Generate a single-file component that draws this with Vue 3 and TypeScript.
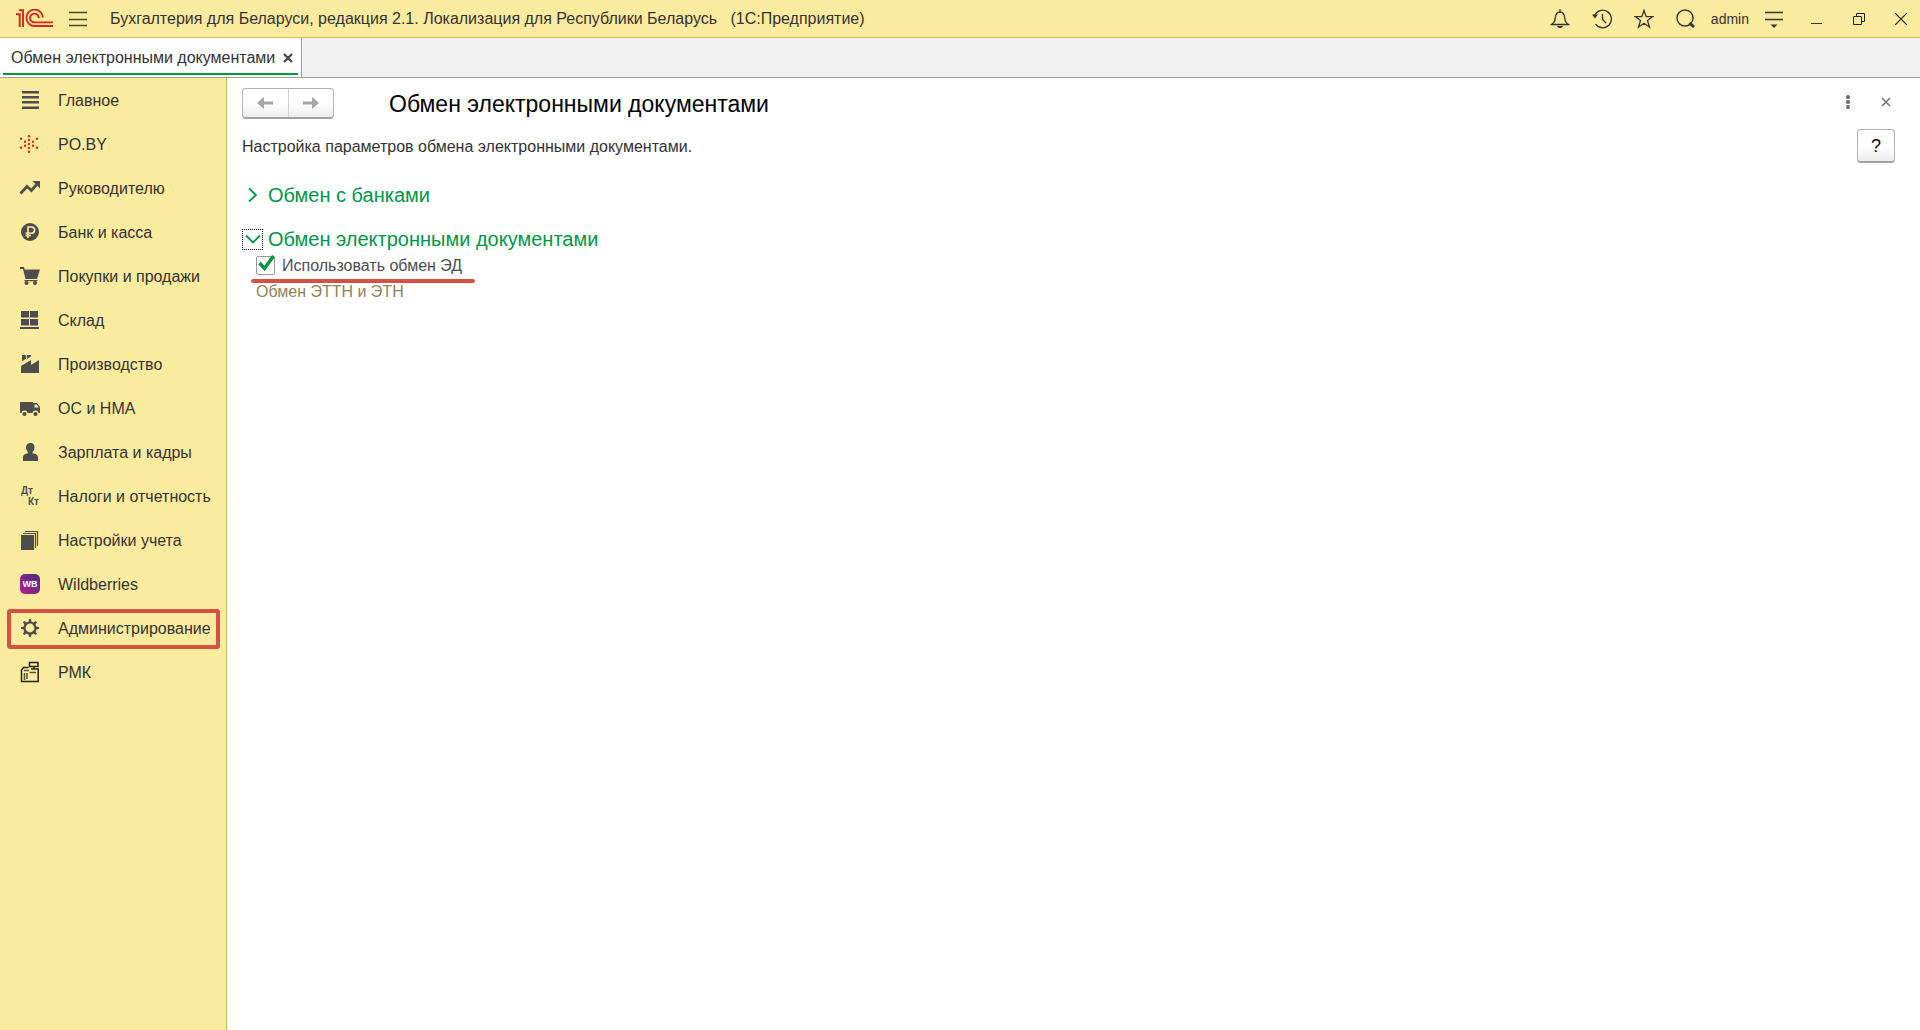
<script setup lang="ts">
import { ref } from 'vue'

interface Section {
  id: string
  title: string
  highlighted?: boolean
}

const appTitle =
  'Бухгалтерия для Беларуси, редакция 2.1. Локализация для Республики Беларусь   (1С:Предприятие)'

const sections: Section[] = [
  { id: 'main', title: 'Главное' },
  { id: 'poby', title: 'PO.BY' },
  { id: 'manager', title: 'Руководителю' },
  { id: 'bank', title: 'Банк и касса' },
  { id: 'trade', title: 'Покупки и продажи' },
  { id: 'stock', title: 'Склад' },
  { id: 'production', title: 'Производство' },
  { id: 'assets', title: 'ОС и НМА' },
  { id: 'salary', title: 'Зарплата и кадры' },
  { id: 'taxes', title: 'Налоги и отчетность' },
  { id: 'settings', title: 'Настройки учета' },
  { id: 'wb', title: 'Wildberries' },
  { id: 'admin', title: 'Администрирование', highlighted: true },
  { id: 'rmk', title: 'РМК' },
]

const dots: [number, number][] = [
  [10, 2.3], [10, 6], [10, 10], [10, 14], [10, 17.7],
  [6, 7.7], [14, 7.7], [6, 11.7], [14, 11.7],
  [2, 4.7], [18, 4.7], [2, 13.7], [18, 13.7],
]

const teeth = [0, 45, 90, 135, 180, 225, 270, 315]

const useExchange = ref(true)
</script>

<template>
  <div class="app">
    <header class="titlebar">
      <svg class="logo" width="38" height="20" viewBox="0 0 38 20" fill="none" stroke="#d9251d" stroke-width="1.9">
        <path d="M0 5.2h3.7V18M3 1.2h4V18" />
        <path d="M26.8 8.6A8.2 8.2 0 1 0 18.8 17H37M22.8 9.2A4.4 4.4 0 1 0 18.8 13.4H37" />
      </svg>
      <button class="icon-btn burger" aria-label="Меню">
        <svg width="18" height="16" viewBox="0 0 18 16" stroke="#4a4636" stroke-width="1.4">
          <path d="M0 1.5h18M0 8.500h18M0 14.500h18" />
        </svg>
      </button>
      <h1 class="app-title">{{ appTitle }}</h1>
      <div class="tools">
        <button class="icon-btn" aria-label="Уведомления">
          <svg width="20" height="20" viewBox="0 0 20 20" fill="none" stroke="#333" stroke-width="1.3">
            <path d="M10 0v3M1.500 15.500c2.500-1.500 3.500-3 3.700-6C5.500 5.500 7 3 10 3s4.500 2.500 4.800 6.500c.2 3 1.200 4.500 3.700 6z" />
            <path d="M7 17h6c-.5 1.500-1.500 2-3 2s-2.500-.5-3-2z" fill="#333" stroke="none" />
          </svg>
        </button>
        <button class="icon-btn" aria-label="История">
          <svg width="20" height="20" viewBox="0 0 20 20" fill="none" stroke="#333" stroke-width="1.3">
            <path d="M2.500 6.500A8.800 8.800 0 1 1 3.500 15.200M10.500 5v5.500l3.500 3.500" />
            <path d="M0 5.500h6l-3 4z" fill="#333" stroke="none" />
          </svg>
        </button>
        <button class="icon-btn" aria-label="Избранное">
          <svg width="20" height="20" viewBox="0 0 20 20" fill="none" stroke="#333" stroke-width="1.3">
            <path d="M10 1.500l2.200 6.100h6.600l-5.300 4 2 6.600L10 14.300l-5.500 3.900 2-6.600-5.300-4h6.600z" />
          </svg>
        </button>
        <button class="icon-btn" aria-label="Поиск">
          <svg width="20" height="20" viewBox="0 0 20 20" fill="none" stroke="#333">
            <circle cx="9" cy="9" r="8" stroke-width="1.4" />
            <path d="M13.500 14l4.500 4" stroke-width="3" />
          </svg>
        </button>
        <a class="user" href="#">admin</a>
        <button class="icon-btn" aria-label="Сервис">
          <svg width="20" height="20" viewBox="0 0 20 20">
            <path d="M1 3.500h18M1 10.500h18" stroke="#333" stroke-width="1.4" />
            <path d="M6.500 15.500h7l-3.500 3.500z" fill="#333" />
          </svg>
        </button>
      </div>
      <div class="window-buttons">
        <button class="icon-btn" aria-label="Свернуть">
          <svg width="12" height="12" viewBox="0 0 12 12"><path d="M0 10.500h11" stroke="#333" /></svg>
        </button>
        <button class="icon-btn" aria-label="Восстановить">
          <svg width="12" height="12" viewBox="0 0 12 12" fill="none" stroke="#222">
            <path d="M.5 3.500h8v8h-8zM3.500 3V.5h8v8H9" />
          </svg>
        </button>
        <button class="icon-btn" aria-label="Закрыть">
          <svg width="12" height="12" viewBox="0 0 12 12" stroke="#222" stroke-width="1.2">
            <path d="M0 0l12 12M12 0L0 12" />
          </svg>
        </button>
      </div>
    </header>

    <nav class="tabs">
      <div class="tab">
        <a class="tab-title" href="#">Обмен электронными документами</a>
        <button class="icon-btn" aria-label="Закрыть вкладку">
          <svg width="10" height="10" viewBox="0 0 10 10" stroke="#444" stroke-width="2.2">
            <path d="M1 1l8 8M9 1L1 9" />
          </svg>
        </button>
      </div>
    </nav>

    <div class="body">
      <aside class="sidebar">
        <a v-for="s in sections" :key="s.id" href="#" class="item" :class="{ highlighted: s.highlighted }">
          <svg class="item-icon" width="22" height="22" viewBox="0 0 22 22" fill="#4d4d4d">
            <path v-if="s.id === 'main'" d="M3 2h17v2.500H3zM3 7h17v2.500H3zM3 12h17v2.500H3zM3 17.500h17V20H3z" />
            <g v-else-if="s.id === 'poby'" fill="#dd2a1b">
              <circle v-for="(d, i) in dots" :key="i" :cx="d[0]" :cy="d[1] + 1" r="1.200" />
            </g>
            <g v-else-if="s.id === 'manager'">
              <path d="M1.500 16.500l6.500-7 4.500 4L18 7" fill="none" stroke="#4d4d4d" stroke-width="2.800" />
              <path d="M13.500 4H21v7.500z" />
            </g>
            <g v-else-if="s.id === 'bank'">
              <circle cx="11" cy="11" r="9" />
              <path d="M9 17V6h3.500a3 3 0 0 1 0 6.200H6.500M6.500 14.500H12" fill="none" stroke="#fbeb9e" stroke-width="1.600" />
            </g>
            <g v-else-if="s.id === 'trade'">
              <path d="M1 2h4l.6 2.500H21L18 14H6.500L4 4H1zM5.500 15h13v1.300h-13z" />
              <circle cx="7.500" cy="18" r="2" /><circle cx="16" cy="18" r="2" />
            </g>
            <path v-else-if="s.id === 'stock'" d="M2 2h8v6.500H2zM11 2h8v6.500h-8zM2 10h8v6.500H2zM11 10h8v6.500h-8zM1 18h19v2H1z" />
            <path v-else-if="s.id === 'production'" d="M2 20v-7l10-6v5l8-5v13zM3 2h4v3.500l-4 3zM8 2h4v1.500L8 6z" />
            <g v-else-if="s.id === 'assets'">
              <path d="M1 5h13v11H1zM14 6h4l3 4v6h-7z" />
              <path d="M15.500 7.500h2.200l2 3h-4.200z" fill="#fbeb9e" />
              <g fill="#fbeb9e"><circle cx="5.500" cy="16.500" r="3" /><circle cx="16.500" cy="16.500" r="3" /></g>
              <circle cx="5.500" cy="17" r="2.100" /><circle cx="16.500" cy="17" r="2.100" />
            </g>
            <path v-else-if="s.id === 'salary'" d="M11.500 2c2.500 0 4 1.600 4 4.200 0 2.200-1 4-2 5v1c3 .5 5.500 1.500 5.500 4V20H4v-3.800c0-2.500 2.500-3.500 5-4v-1c-1-1-2-2.800-2-5C7 3.600 9 2 11.500 2z" />
            <g v-else-if="s.id === 'taxes'" class="glyph-text">
              <text x="2" y="9">Дт</text><text x="9" y="20">Кт</text>
            </g>
            <g v-else-if="s.id === 'settings'">
              <path d="M2 6h13v15H2z" />
              <path d="M4 4.500h12.500V19M6 2.500h12.500V17" fill="none" stroke="#4d4d4d" stroke-width="1.200" />
            </g>
            <g v-else-if="s.id === 'wb'">
              <defs>
                <linearGradient id="wb" x1="0" y1="1" x2="1" y2="0">
                  <stop offset="0" stop-color="#b0218c" /><stop offset="1" stop-color="#4a2a86" />
                </linearGradient>
              </defs>
              <rect x="1" y="1" width="20" height="20" rx="5" fill="url(#wb)" />
              <text class="wb-text" x="11" y="14" text-anchor="middle">WB</text>
            </g>
            <g v-else-if="s.id === 'admin'">
              <circle cx="11" cy="11" r="5.500" fill="none" stroke="#4d4d4d" stroke-width="2.200" />
              <path v-for="t in teeth" :key="t" d="M9.500 5.500L10 2h2l.5 3.500z" :transform="`rotate(${t} 11 11)`" />
            </g>
            <g v-else fill="none" stroke="#222" stroke-width="1.500">
              <path d="M10.500 1.500h8.500v4h-8.500zM15 5.500v3M9.500 6.500H4.500L2.500 9v11.500h16.700V8H12" />
              <path d="M5 9.500h5M5.500 12v7M8 12v6M10.500 11.500H17" stroke="#5a5233" />
            </g>
          </svg>
          <span class="item-title">{{ s.title }}</span>
        </a>
      </aside>

      <main class="content">
        <div class="head">
          <div class="history">
            <button aria-label="Назад">
              <svg width="16" height="12" viewBox="0 0 16 12" fill="#a6a6a6"><path d="M0 6l7-6v4.500h9v3H7V12z" /></svg>
            </button>
            <button aria-label="Вперед">
              <svg width="16" height="12" viewBox="0 0 16 12" fill="#a6a6a6"><path d="M16 6L9 0v4.500H0v3h9V12z" /></svg>
            </button>
          </div>
          <h2 class="page-title">Обмен электронными документами</h2>
          <div class="page-tools">
            <button class="icon-btn" aria-label="Еще">
              <svg width="6" height="16" viewBox="0 0 6 16" fill="#666">
                <circle cx="3" cy="3" r="2" /><circle cx="3" cy="8" r="2" /><circle cx="3" cy="13" r="2" />
              </svg>
            </button>
            <button class="icon-btn" aria-label="Закрыть форму">
              <svg width="10" height="10" viewBox="0 0 10 10" stroke="#777" stroke-width="1.6">
                <path d="M1 1l8 8M9 1L1 9" />
              </svg>
            </button>
          </div>
        </div>

        <div class="intro">
          <p>Настройка параметров обмена электронными документами.</p>
          <button class="help">?</button>
        </div>

        <button class="group">
          <span class="chevron">
            <svg width="16" height="16" viewBox="0 0 16 16" fill="none" stroke="#009646" stroke-width="1.8"><path d="M4 1.500l7 6.500-7 6.500" /></svg>
          </span>
          Обмен с банками
        </button>
        <button class="group">
          <span class="chevron focused">
            <svg width="16" height="16" viewBox="0 0 16 16" fill="none" stroke="#009646" stroke-width="1.8"><path d="M1 4.500l7 7 7-7" /></svg>
          </span>
          Обмен электронными документами
        </button>

        <div class="group-body">
          <div class="check-row">
            <span class="check">
              <input id="use-exchange" v-model="useExchange" type="checkbox" />
              <svg v-if="useExchange" width="20" height="20" viewBox="0 0 20 20" fill="none" stroke="#009646" stroke-width="3.4">
                <path d="M3.500 9l5 5.500L17.500 2" />
              </svg>
            </span>
            <label for="use-exchange">Использовать обмен ЭД</label>
          </div>
          <a class="sub-link" href="#">Обмен ЭТТН и ЭТН</a>
        </div>
      </main>
    </div>
  </div>
</template>

<style>
body {
  margin: 0;
  background: #fff;
}
</style>

<style scoped>
.app {
  display: flex;
  flex-direction: column;
  min-height: 100vh;
  font: 16px/20px "Liberation Sans", Arial, sans-serif;
  color: #333;
}
a {
  color: inherit;
  text-decoration: none;
}
button {
  font: inherit;
  color: inherit;
  cursor: pointer;
}
svg {
  display: block;
  flex: none;
}
.icon-btn {
  display: flex;
  padding: 0;
  border: 0;
  background: none;
}
.titlebar {
  display: flex;
  align-items: center;
  height: 37px;
  padding: 0 13px 0 16px;
  background: #fbeb9e;
  border-bottom: 1px solid #c9bb68;
}
.burger {
  margin-left: 15px;
}
.app-title {
  flex: 1;
  margin: 0 0 0 23px;
  font-size: 16px;
  font-weight: 400;
  white-space: pre;
}
.tools {
  display: flex;
  align-items: center;
  gap: 22px;
}
.user {
  margin: 0 -7px;
  font-size: 14px;
}
.window-buttons {
  display: flex;
  gap: 30px;
  margin-left: 27px;
}
.tabs {
  display: flex;
  height: 39px;
  background: #f1f1f1;
  border-bottom: 1px solid #a0a0a0;
}
.tab {
  position: relative;
  display: flex;
  align-items: center;
  gap: 8px;
  padding: 0 8px 0 11px;
  background: #fff;
  border-right: 1px solid #a0a0a0;
}
.tab::after {
  content: "";
  position: absolute;
  left: 3px;
  right: 3px;
  bottom: 2px;
  height: 2px;
  background: #009646;
}
.body {
  display: flex;
  flex: 1;
}
.sidebar {
  flex: none;
  width: 226px;
  background: #fbeb9e;
  border-right: 1px solid #c9bb68;
}
.item {
  position: relative;
  display: flex;
  align-items: center;
  gap: 17px;
  height: 44px;
  padding-left: 19px;
  white-space: nowrap;
}
.item-title,
.intro p,
.check-row label {
  padding-top: 2px;
}
.highlighted::after {
  content: "";
  position: absolute;
  inset: 3px 6px 1px 7px;
  border: 4px solid #d35244;
  border-radius: 3px;
}
.glyph-text {
  font-size: 10px;
  font-weight: 700;
}
.wb-text {
  font-size: 9px;
  font-weight: 700;
  fill: #fff;
}
.content {
  flex: 1;
  padding: 10px 25px 0 15px;
}
.head {
  display: flex;
  align-items: center;
}
.history {
  display: flex;
  box-sizing: border-box;
  width: 92px;
  height: 31px;
  border: 1px solid #b0b0b0;
  border-bottom: 2px solid #a0a0a0;
  border-radius: 4px;
  background: linear-gradient(#fff 50%, #ececec);
}
.history button {
  display: flex;
  flex: 1;
  align-items: center;
  justify-content: center;
  padding: 0;
  border: 0;
  background: none;
}
.history button + button {
  border-left: 1px solid #d0d0d0;
}
.page-title {
  flex: 1;
  margin: 0 0 0 55px;
  font-size: 23px;
  line-height: 26px;
  font-weight: 400;
  color: #000;
}
.page-tools {
  display: flex;
  align-items: center;
  gap: 30px;
  margin-right: 4px;
  padding-bottom: 4px;
}
.intro {
  display: flex;
  align-items: center;
  justify-content: space-between;
  margin-top: 10px;
}
.intro p {
  margin: 0;
}
.help {
  width: 38px;
  height: 34px;
  padding: 0;
  border: 1px solid #b0b0b0;
  border-bottom: 2px solid #a0a0a0;
  border-radius: 4px;
  background: linear-gradient(#fff 50%, #ececec);
  font-size: 18px;
  color: #000;
}
.group {
  display: flex;
  align-items: center;
  gap: 5px;
  margin-top: 20px;
  padding: 0;
  border: 0;
  background: none;
  font-size: 20px;
  line-height: 24px;
  color: #009646;
}
.chevron {
  display: flex;
  align-items: center;
  justify-content: center;
  box-sizing: border-box;
  width: 21px;
  height: 21px;
}
.focused {
  outline: 1px dotted #000;
  outline-offset: -1px;
}
.group-body {
  padding: 4px 0 0 14px;
}
.check-row {
  position: relative;
  display: flex;
  align-items: center;
  gap: 7px;
  width: 212px;
  height: 20px;
}
.check-row::after {
  content: "";
  position: absolute;
  left: -5px;
  right: -7px;
  bottom: -8px;
  height: 4px;
  border-radius: 2px;
  background: #d35244;
}
.check {
  position: relative;
  display: flex;
}
.check input {
  appearance: none;
  width: 19px;
  height: 19px;
  margin: 0;
  border: 1px solid #999;
  border-radius: 2px;
  background: #fff;
}
.check svg {
  position: absolute;
  left: 0;
  top: -2px;
  pointer-events: none;
}
.check-row label {
  white-space: nowrap;
  color: #4d4d4d;
}
.sub-link {
  display: inline-block;
  margin-top: 7px;
  color: #8f8259;
}
</style>
